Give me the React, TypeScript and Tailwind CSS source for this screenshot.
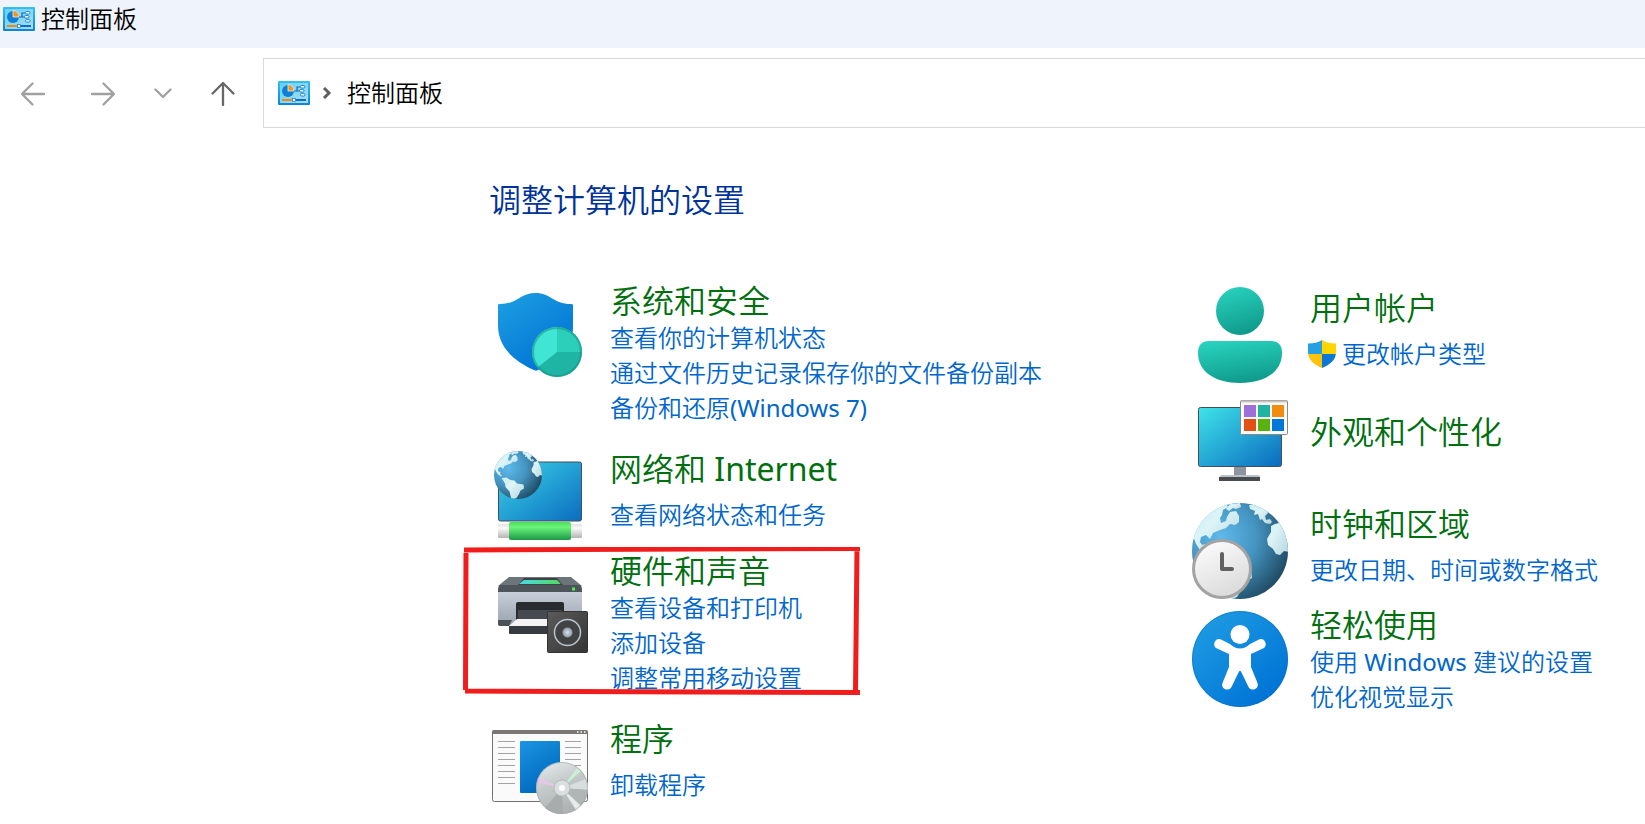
import type { ReactNode } from "react";

type Category = {
  title: string;
  icon: ReactNode;
  links: string[];
  shield?: boolean;
  marked?: boolean;
};

function PanelIcon() {
  return (
    <svg className="h-6 w-8 shrink-0" viewBox="0 0 32 24" aria-hidden="true">
      <defs>
        <linearGradient id="panel-edge" x1="0" y1="0" x2="0" y2="1">
          <stop offset="0" stopColor="#35c0f2" />
          <stop offset="1" stopColor="#0c83d8" />
        </linearGradient>
        <linearGradient id="panel-face" x1="0" y1="0" x2="1" y2="1">
          <stop offset="0" stopColor="#62d3f8" />
          <stop offset="1" stopColor="#a9dcf8" />
        </linearGradient>
      </defs>
      <rect width="32" height="24" rx="1" fill="url(#panel-edge)" />
      <rect x="2" y="2" width="28" height="20" fill="url(#panel-face)" />
      <circle cx="10" cy="10" r="6" fill="#0f7fd4" />
      <path d="M10 10V3.500A6 6 0 0 1 16 10z" fill="#f7941d" stroke="#d9f4ff" strokeWidth="0.800" />
      <path d="M16 10h3V6h3M19 10h3" fill="none" stroke="#1467a8" strokeWidth="1.200" />
      <g fill="#fff" stroke="#1283d6" strokeWidth="1">
        <rect x="22.500" y="4.500" width="4.500" height="2.500" rx="1.200" />
        <rect x="21.500" y="8.500" width="4.500" height="2.500" rx="1.200" />
        <rect x="22.500" y="12.500" width="4.500" height="2.500" rx="1.200" />
      </g>
      <path d="M4 19h11" stroke="#f08a10" strokeWidth="2" />
      <path d="M17 19h11" stroke="#0b6fca" strokeWidth="2" />
      <rect x="14.500" y="17.500" width="3" height="3" fill="#fff" stroke="#1277cf" strokeWidth="0.700" />
    </svg>
  );
}

function Globe({ id }: { id: string }) {
  return (
    <g>
      <defs>
        <radialGradient id={`${id}-sea`} cx="0.300" cy="0.350" r="0.750">
          <stop offset="0" stopColor="#5fb9ea" />
          <stop offset="0.500" stopColor="#4494c0" />
          <stop offset="1" stopColor="#1f4a63" />
        </radialGradient>
        <linearGradient id={`${id}-land`} x1="0" y1="0" x2="1" y2="1">
          <stop offset="0" stopColor="#c9edf3" />
          <stop offset="0.400" stopColor="#dcf4f8" />
          <stop offset="1" stopColor="#b5d6de" />
        </linearGradient>
        <clipPath id={`${id}-clip`}>
          <circle cx="48" cy="48" r="48" />
        </clipPath>
      </defs>
      <circle cx="48" cy="48" r="48" fill={`url(#${id}-sea)`} />
      <g clipPath={`url(#${id}-clip)`} fill={`url(#${id}-land)`}>
        <path d="M0 32L12 14 24 4l10-3 2 3-5 3-1 5-2 3 1 5 5-2 1-4 3-5 6-1 3 5 0 6-4 3-5-1-4 4-6 2-7 3-3 6-4-4-5 2-1 5 2 3 3-1-1 5 4 3-2 2-6-4-4-6-3-8z" />
        <path d="M38 1l10-1 1 4-5 2-3-1-4 3-3-2z" />
        <path d="M57 2l11 0 6 4 2 4-3 3 1 4 4-1 2 3-2 2-5-1-3-4-2 1-2-6-4 1 1-4-5-2z" />
        <path d="M79 23l4-2 4-1-5-8 2-2 8 12 5 14v13l-5-1-4 4-4-1-3-5-5-4-1-6 4-7z" />
        <path d="M15 54l10-1 8 5 8 1 5 6 13 2 1 8-7 4-3 7-5 8-10 4-4-17-8-9-1-7z" />
      </g>
    </g>
  );
}

function SecurityIcon() {
  return (
    <svg className="size-24 shrink-0" viewBox="0 0 96 96" aria-hidden="true">
      <defs>
        <linearGradient id="sec-blue" x1="0" y1="0" x2="0.700" y2="1">
          <stop offset="0" stopColor="#1ea0e2" />
          <stop offset="1" stopColor="#0072d4" />
        </linearGradient>
      </defs>
      <path
        d="M6 18q0-1 2-1C26 17 28 6 43.500 6S61 17 79 17q2 0 2 1v22C81 62 62 76 46 83q-2 1-4 0C20 73 6 59 6 38z"
        fill="url(#sec-blue)"
      />
      <circle cx="65" cy="65" r="25" fill="#1fb5a5" />
      <path d="M65 65V40A25 25 0 0 0 45.500 80.500z" fill="#40e5d3" />
      <path d="M65 65V40A25 25 0 0 1 90 65z" fill="#2ccfb9" />
      <circle cx="65" cy="65" r="24" fill="none" stroke="#158c7f" strokeOpacity="0.500" strokeWidth="2" />
    </svg>
  );
}

function NetworkIcon() {
  return (
    <svg className="size-24 shrink-0" viewBox="0 0 96 96" aria-hidden="true">
      <defs>
        <linearGradient id="net-screen" x1="0" y1="0" x2="1" y2="1">
          <stop offset="0" stopColor="#3bd5e8" />
          <stop offset="1" stopColor="#0b6cc0" />
        </linearGradient>
        <linearGradient id="net-cable" x1="0" y1="0" x2="0" y2="1">
          <stop offset="0" stopColor="#4fdc5c" />
          <stop offset="0.300" stopColor="#6af578" />
          <stop offset="1" stopColor="#1d9647" />
        </linearGradient>
        <linearGradient id="net-plug" x1="0" y1="0" x2="0" y2="1">
          <stop offset="0" stopColor="#e3e3e3" />
          <stop offset="0.300" stopColor="#fafafa" />
          <stop offset="1" stopColor="#b4b4b4" />
        </linearGradient>
      </defs>
      <rect x="6.500" y="14" width="83" height="59" rx="2" fill="url(#net-screen)" stroke="#454f57" />
      <rect x="6" y="76" width="84" height="14" rx="1" fill="url(#net-plug)" />
      <rect x="17" y="74" width="62" height="18" rx="2" fill="url(#net-cable)" />
      <g transform="translate(2 3) scale(0.500)">
        <Globe id="net-globe" />
      </g>
    </svg>
  );
}

function HardwareIcon() {
  return (
    <svg className="size-24 shrink-0" viewBox="0 0 96 96" aria-hidden="true">
      <defs>
        <linearGradient id="hw-body" x1="0" y1="0" x2="0" y2="1">
          <stop offset="0" stopColor="#c8cfda" />
          <stop offset="1" stopColor="#98a1ae" />
        </linearGradient>
        <linearGradient id="hw-panel" x1="0" y1="0" x2="1" y2="0">
          <stop offset="0" stopColor="#43dde9" />
          <stop offset="1" stopColor="#55d75d" />
        </linearGradient>
        <linearGradient id="hw-box" x1="0" y1="0" x2="1" y2="1">
          <stop offset="0" stopColor="#5b5b5b" />
          <stop offset="1" stopColor="#343434" />
        </linearGradient>
        <radialGradient id="hw-cone">
          <stop offset="0" stopColor="#d7e1ea" />
          <stop offset="1" stopColor="#8e99a5" />
        </radialGradient>
      </defs>
      <path d="M6 29l11-9h62l11 9z" fill="#6d757b" />
      <path d="M26 28l6-7h33l6 7z" fill="#3d4348" />
      <path d="M27 27l5-4h33l4 4z" fill="url(#hw-panel)" />
      <path d="M6 33q0-5 3-5h78q3 0 3 5v2H6z" fill="#4d545a" />
      <path d="M6 35h84v31q0 3-3 3H9q-3 0-3-3z" fill="url(#hw-body)" />
      <path d="M6 63h14l-3 6H8q-2 0-2-2z" fill="#4b5157" />
      <rect x="80" y="30.500" width="3" height="3" fill="#4cf04c" />
      <path d="M24 47q0-2 2-2h44q2 0 2 2v16H24z" fill="#292c2f" />
      <path d="M26 53h44v10H26z" fill="#454b50" />
      <path d="M17 69l8-7h47v15H17z" fill="#f3f3f3" />
      <path d="M17 69h50v8H18q-1 0-1-1z" fill="#353b40" />
      <rect x="55.500" y="54.500" width="40" height="41" rx="1" fill="url(#hw-box)" stroke="#333" />
      <circle cx="75.500" cy="75.500" r="13" fill="#404244" stroke="#bcc3cd" strokeWidth="1.500" />
      <circle cx="75.500" cy="75.500" r="5" fill="url(#hw-cone)" />
    </svg>
  );
}

function ProgramsIcon() {
  return (
    <svg className="size-24 shrink-0" viewBox="0 0 96 96" aria-hidden="true">
      <defs>
        <linearGradient id="prog-blue" x1="0" y1="0" x2="0.500" y2="1">
          <stop offset="0" stopColor="#1b96e2" />
          <stop offset="1" stopColor="#0067bd" />
        </linearGradient>
        <linearGradient id="prog-disc" x1="0" y1="0" x2="0.400" y2="1">
          <stop offset="0" stopColor="#e9eeee" />
          <stop offset="0.500" stopColor="#c4caca" />
          <stop offset="1" stopColor="#aeb3b3" />
        </linearGradient>
      </defs>
      <rect x="0.500" y="12.500" width="95" height="71" rx="2" fill="#fafafa" stroke="#73716e" />
      <path d="M0 16v-2q0-2 2-2h92q2 0 2 2v2z" fill="#797673" />
      <path d="M85 14h1.500M88.500 14h1.500M92 14h1.500" stroke="#fff" strokeWidth="1.500" />
      <path
        d="M6 23.500h17M6 29.500h17M6 35.500h17M6 41.500h17M6 47.500h17M6 53.500h17M6 59.500h17M6 65.500h17M73 23.500h16M73 29.500h16M73 35.500h16M73 41.500h16M73 47.500h16"
        stroke="#a3a3a3"
      />
      <rect x="28" y="23" width="40" height="52" rx="1" fill="url(#prog-blue)" />
      <circle cx="70" cy="70" r="26" fill="url(#prog-disc)" />
      <path d="M70 70l24-9a26 26 0 0 1 2 11z" fill="#d8dddd" />
      <path d="M70 70l26 2a26 26 0 0 1-7 16z" fill="#b0b5b5" />
      <path d="M70 70L53 90a26 26 0 0 0 18 6z" fill="#a8acac" />
      <path d="M70 70l19 18-5 4z" fill="#e8eaea" />
      <path d="M70 70L46 60l-1 4z" fill="#eec4ec" />
      <path d="M70 70l15-20 4 3z" fill="#c9eed9" />
      <circle cx="70" cy="70" r="25.500" fill="none" stroke="#a2a7a7" strokeOpacity="0.600" />
      <circle cx="70" cy="70" r="8" fill="#d9dede" stroke="#b6bbbb" />
      <circle cx="70" cy="70" r="3" fill="#fff" />
    </svg>
  );
}

function AccountsIcon() {
  return (
    <svg className="size-24 shrink-0" viewBox="0 0 96 96" aria-hidden="true">
      <defs>
        <linearGradient id="acc-teal" x1="0.300" y1="0" x2="0.600" y2="1">
          <stop offset="0" stopColor="#28d1bd" />
          <stop offset="1" stopColor="#0f998a" />
        </linearGradient>
      </defs>
      <circle cx="48" cy="24" r="24" fill="url(#acc-teal)" />
      <path
        d="M17 54h62q11 0 11 12C90 84 74 96 48 96S6 84 6 66q0-12 11-12z"
        fill="url(#acc-teal)"
      />
    </svg>
  );
}

function AppearanceIcon() {
  return (
    <svg className="size-24 shrink-0" viewBox="0 0 96 96" aria-hidden="true">
      <defs>
        <linearGradient id="app-screen" x1="0" y1="0" x2="1" y2="1">
          <stop offset="0" stopColor="#3fe3ea" />
          <stop offset="1" stopColor="#0a6abf" />
        </linearGradient>
      </defs>
      <rect x="42" y="71" width="12" height="11" fill="#8d969e" />
      <path d="M28 82q0-2 2-2h36q2 0 2 2z" fill="#b9c2c9" />
      <rect x="27" y="82" width="41" height="4" fill="#474c51" />
      <rect x="6.500" y="12.500" width="83" height="59" rx="2" fill="url(#app-screen)" stroke="#454f57" />
      <rect x="48.500" y="5.500" width="47" height="34" rx="1" fill="#fafafa" stroke="#8b8985" />
      <path d="M49 6.500h46" stroke="#c8c6c3" strokeWidth="2" />
      <rect x="52" y="10" width="12" height="12" fill="#9e6fd6" />
      <rect x="66" y="10" width="12" height="12" fill="#1eb3a3" />
      <rect x="80" y="10" width="12" height="12" fill="#f28c0e" />
      <rect x="52" y="24" width="12" height="12" fill="#e35014" />
      <rect x="66" y="24" width="12" height="12" fill="#58b310" />
      <rect x="80" y="24" width="12" height="12" fill="#0078d7" />
    </svg>
  );
}

function ClockIcon() {
  return (
    <svg className="size-24 shrink-0" viewBox="0 0 96 96" aria-hidden="true">
      <defs>
        <linearGradient id="clock-face" x1="0" y1="0" x2="0.500" y2="1">
          <stop offset="0" stopColor="#ffffff" />
          <stop offset="1" stopColor="#dcdcdc" />
        </linearGradient>
      </defs>
      <Globe id="clock-globe" />
      <circle cx="30" cy="66" r="28.500" fill="url(#clock-face)" stroke="#a3a3a3" strokeWidth="3" />
      <path d="M30 51v15h10" fill="none" stroke="#616161" strokeWidth="4" strokeLinecap="round" strokeLinejoin="round" />
    </svg>
  );
}

function AccessIcon() {
  return (
    <svg className="size-24 shrink-0" viewBox="0 0 96 96" aria-hidden="true">
      <defs>
        <linearGradient id="ease-blue" x1="0.100" y1="0.100" x2="0.800" y2="0.900">
          <stop offset="0" stopColor="#1e9be2" />
          <stop offset="1" stopColor="#0074d6" />
        </linearGradient>
      </defs>
      <circle cx="48" cy="48" r="48" fill="url(#ease-blue)" />
      <circle cx="48" cy="48" r="47.500" fill="none" stroke="#0a6fbd" strokeOpacity="0.500" />
      <circle cx="48" cy="23.500" r="9.500" fill="#fff" />
      <path
        d="M28.500 28.200L38 33q10 9 20 0l9.500-4.800c5-2 9 6 4 9L59 43v13l6.500 16c2 6-6 9-9 4L49 60.500q-1-1.500-2 0L39.500 76c-3 5-11 2-9-4L37 56V43l-12.500-5.800c-5-3-1-11 4-9z"
        fill="#fff"
      />
    </svg>
  );
}

function UacShield() {
  return (
    <svg className="size-7 shrink-0" viewBox="0 0 28 28" aria-hidden="true">
      <defs>
        <clipPath id="uac">
          <path d="M0 3.500Q9 3.500 14 0q5 3.500 14 3.500V12c0 8-6 12.500-14 16C6 24.500 0 20 0 12z" />
        </clipPath>
      </defs>
      <g clipPath="url(#uac)">
        <rect width="14" height="14" fill="#27a0e3" />
        <rect x="14" width="14" height="14" fill="#ffd500" />
        <rect y="14" width="14" height="14" fill="#ffc30d" />
        <rect x="14" y="14" width="14" height="14" fill="#0a78d4" />
      </g>
    </svg>
  );
}

/** Hand-drawn red frame round a category */
function RedMark() {
  return (
    <svg
      className="pointer-events-none absolute -top-2.5 -left-7.5 h-[148px] w-[400px]"
      viewBox="0 0 400 148"
      fill="none"
      stroke="#f11d1d"
      strokeWidth="5"
      aria-hidden="true"
    >
      <path d="M2 3L398 1.500M4 6L3.500 143M3 144L398 145.500M395 2L393.500 145" />
    </svg>
  );
}

const leftColumn: Category[] = [
  {
    title: "系统和安全",
    icon: <SecurityIcon />,
    links: ["查看你的计算机状态", "通过文件历史记录保存你的文件备份副本", "备份和还原(Windows 7)"],
  },
  { title: "网络和 Internet", icon: <NetworkIcon />, links: ["查看网络状态和任务"] },
  {
    title: "硬件和声音",
    icon: <HardwareIcon />,
    links: ["查看设备和打印机", "添加设备", "调整常用移动设置"],
    marked: true,
  },
  { title: "程序", icon: <ProgramsIcon />, links: ["卸载程序"] },
];

const rightColumn: Category[] = [
  { title: "用户帐户", icon: <AccountsIcon />, links: ["更改帐户类型"], shield: true },
  { title: "外观和个性化", icon: <AppearanceIcon />, links: [] },
  { title: "时钟和区域", icon: <ClockIcon />, links: ["更改日期、时间或数字格式"] },
  {
    title: "轻松使用",
    icon: <AccessIcon />,
    links: ["使用 Windows 建议的设置", "优化视觉显示"],
  },
];

// The fewer links a category has, the lower its title sits beside the icon.
function textPadding(count: number) {
  if (count === 0) return "pt-[23px]";
  if (count === 1) return "pt-[7px]";
  return "";
}

/** Latin runs need a heavier weight than the Chinese around them */
function MixedText({ text }: { text: string }) {
  return (
    <>
      {text.split(/([ -~]+)/).map((part, i) =>
        i % 2 === 1 ? (
          <span key={i} className="font-normal">
            {part}
          </span>
        ) : (
          part
        ),
      )}
    </>
  );
}

function CategoryItem({ title, icon, links, shield, marked }: Category) {
  return (
    <section className="relative flex min-h-24 items-start gap-[22px]">
      {icon}
      <div className={textPadding(links.length)}>
        <h2 className="text-[32px] leading-7 text-[#00700f]">
          <a href="#" className="whitespace-nowrap">
            <MixedText text={title} />
          </a>
        </h2>
        {links.length > 0 && (
          <ul className={links.length === 1 ? "pt-[14px]" : "pt-[5px] pb-[10px]"}>
            {links.map((link) => (
              <li key={link} className="text-2xl leading-[35px] text-[#0066cc]">
                <a
                  href="#"
                  className={shield ? "-ml-0.5 flex items-center gap-1.5" : "whitespace-nowrap"}
                >
                  {shield && <UacShield />}
                  <MixedText text={link} />
                </a>
              </li>
            ))}
          </ul>
        )}
      </div>
      {marked && <RedMark />}
    </section>
  );
}

function NavButton({ label, path, dark }: { label: string; path: string; dark?: boolean }) {
  return (
    <button type="button" aria-label={label} className={dark ? "text-[#686868]" : "text-[#a0a0a0]"}>
      <svg
        className="size-6"
        viewBox="0 0 24 24"
        fill="none"
        stroke="currentColor"
        strokeWidth="2.300"
        strokeLinecap="round"
        strokeLinejoin="round"
        aria-hidden="true"
      >
        <path d={path} />
      </svg>
    </button>
  );
}

export default function App() {
  return (
    <div className="min-h-screen overflow-hidden bg-white font-['Noto_Sans','Noto_Sans_CJK_SC',sans-serif] font-[350] text-black">
      <header className="flex h-12 items-start gap-1.5 bg-[#eff3fb] pt-[7px] pl-[3px]">
        <PanelIcon />
        <h1 className="text-2xl leading-6">控制面板</h1>
      </header>

      <nav className="flex items-center pt-2.5">
        <div className="flex w-[263px] shrink-0 items-center pt-0.5 pl-[21px]">
          <div className="flex gap-[46px]">
            <NavButton label="后退" path="M23 12H1M11.500 1.500L1 12l10.500 10.500" />
            <NavButton label="前进" path="M1 12h22M12.500 1.500L23 12 12.500 22.500" />
          </div>
          <div className="flex gap-9 pl-9">
            <NavButton label="最近" path="M4.500 7.500l7.500 7.500 7.500-7.500" />
            <NavButton label="向上" path="M12 23V1M1.500 11.500L12 1l10.500 10.500" dark />
          </div>
        </div>
        <div className="flex h-[70px] grow items-center border border-r-0 border-[#d9d9d9] pl-3.5">
          <PanelIcon />
          <svg className="ml-3 mr-[13px] size-3" viewBox="0 0 12 12" fill="none" stroke="#606060" strokeWidth="3" aria-hidden="true">
            <path d="M2 1l5 5-5 5" />
          </svg>
          <a href="#" className="text-2xl leading-8">
            控制面板
          </a>
        </div>
      </nav>

      <main className="pt-[52px] pl-[489px]">
        <p className="text-[32px] leading-10 text-[#003399]">调整计算机的设置</p>
        <div className="grid grid-cols-[minmax(0,700px)_minmax(0,1fr)] pt-[67px] pl-[3px]">
          <div className="flex flex-col gap-[13px]">
            {leftColumn.map((item) => (
              <CategoryItem key={item.title} {...item} />
            ))}
          </div>
          <div className="flex flex-col gap-3">
            {rightColumn.map((item) => (
              <CategoryItem key={item.title} {...item} />
            ))}
          </div>
        </div>
      </main>
    </div>
  );
}
